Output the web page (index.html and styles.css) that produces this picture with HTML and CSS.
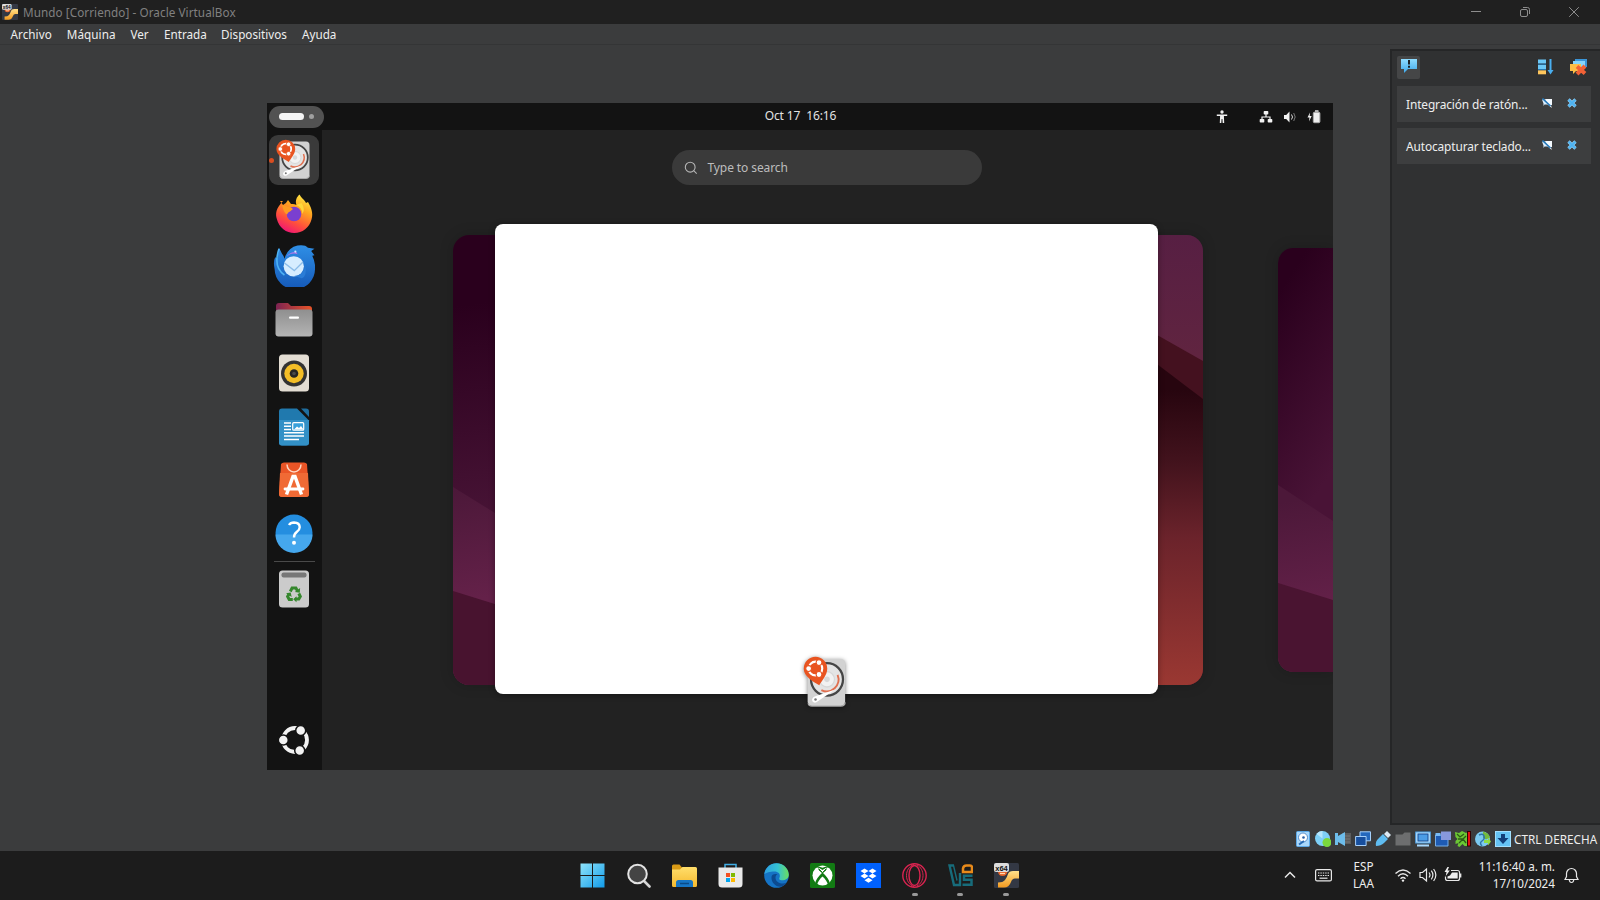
FILE: index.html
```html
<!DOCTYPE html>
<html lang="es">
<head>
<meta charset="utf-8">
<title>Mundo [Corriendo] - Oracle VirtualBox</title>
<link rel="stylesheet" href="styles.css">
</head>
<body>
<svg class="defs" width="0" height="0">
  <defs>
    <linearGradient id="gFox" x1="0.8" y1="0" x2="0.3" y2="1"><stop offset="0" stop-color="#fff04a"/><stop offset=".35" stop-color="#ffa51f"/><stop offset=".7" stop-color="#ff4f3c"/><stop offset="1" stop-color="#ef1477"/></linearGradient>
    <linearGradient id="gBird" x1="0" y1="0" x2="0" y2="1"><stop offset="0" stop-color="#2f8fe6"/><stop offset="1" stop-color="#1559b8"/></linearGradient>
    <linearGradient id="gFolder" x1="0" y1="0" x2="1" y2="0"><stop offset="0" stop-color="#7c2352"/><stop offset="1" stop-color="#ea5428"/></linearGradient>
    <linearGradient id="gGrey" x1="0" y1="0" x2="0" y2="1"><stop offset="0" stop-color="#8f8f8f"/><stop offset="1" stop-color="#b4b4b4"/></linearGradient>
    <linearGradient id="gWin" x1="0" y1="0" x2="1" y2="1"><stop offset="0" stop-color="#8fe4fc"/><stop offset="1" stop-color="#119be8"/></linearGradient>
    <linearGradient id="gEdge" x1="0" y1="0" x2="1" y2="0"><stop offset="0" stop-color="#2d9fe0"/><stop offset=".55" stop-color="#35c2d3"/><stop offset="1" stop-color="#6be05c"/></linearGradient>
    <linearGradient id="gSky" x1="0" y1="0" x2="0" y2="1"><stop offset="0" stop-color="#8fdcff"/><stop offset="1" stop-color="#3ea8ea"/></linearGradient>
    <linearGradient id="gGold" x1="0" y1="0" x2="0" y2="1"><stop offset="0" stop-color="#ffe08a"/><stop offset="1" stop-color="#f39a1f"/></linearGradient>
    <linearGradient id="gFile" x1="0" y1="0" x2="0" y2="1"><stop offset="0" stop-color="#ffde6b"/><stop offset="1" stop-color="#f5b92e"/></linearGradient>
    <symbol id="vm" viewBox="0 0 25 25">
      <rect width="25" height="25" rx="1.5" fill="#333844"/>
      <path d="M4 24.500v-5q5 0 7-2.500t3-6q1-3 5-3h6v7.500h-4q-3 0-4 3.500-2 5.500-7 5.500z" fill="url(#gGold)"/>
      <path d="M4 8h9.500q-.5 5-5 5t-4.500-5z" fill="#e8642a"/><path d="M6 10.500h5" stroke="#ffd9b0" stroke-width="1.200"/>
      <rect x="0" y="0" width="15" height="9" rx="2" fill="#dcdcdc"/>
      <text x="7.5" y="7.6" text-anchor="middle" class="badge">x64</text>
    </symbol>
    <symbol id="installer" viewBox="0 0 40 44">
      <rect x="4.500" y="5.500" width="30" height="37" rx="3.500" fill="#d2d2d2"/>
      <path d="M5 40q0 2.500 3 2.500h23q3.500 0 3.500-3" stroke="#aaa" fill="none"/>
      <circle cx="20" cy="21.500" r="12.800" fill="#e4e4e4" stroke="#454545" stroke-width="1.800"/>
      <circle cx="20" cy="21.500" r="6" fill="#f2f2f2" stroke="#d8d8d8"/><circle cx="20" cy="21.500" r="2.200" fill="#d8d8d8"/>
      <path d="M28.500 18a9.500 9.500 0 0 1-13 12" fill="none" stroke="#e07050" stroke-width="1.500"/>
      <path d="M8 37.500a2.400 2.400 0 0 0 3.500 2l15-10-14 4.700q-4 .8-4.500 3.300z" fill="#fff"/><circle cx="10.800" cy="37.300" r="1" fill="#777"/>
      <path d="M10.800 3.700a9.400 9.400 0 0 1 9.400 9.400c0 5-4.400 9.400-6.400 13-5-3-12.400-7-12.400-13a9.400 9.400 0 0 1 9.400-9.400z" fill="#e95420"/>
      <circle cx="10.800" cy="13" r="5.400" fill="none" stroke="#fff" stroke-width="1.700"/>
      <g fill="#fff" stroke="#e95420" stroke-width=".8"><circle cx="5.300" cy="13" r="2.300"/><circle cx="13.600" cy="8.300" r="2.300"/><circle cx="13.600" cy="17.700" r="2.300"/></g>
    </symbol>
    <symbol id="speechoff" viewBox="0 0 12 12"><path d="M4 2h7v6h-1l.7 3-4.200-3.800z" fill="#f4faff"/><path d="M1 2.500h3l3 5h-3.500l-1 1.500v-2.500z" fill="#dcefff"/><path d="M1.500 1.500l8 7.500" stroke="#2176b8" stroke-width="1.600"/></symbol>
    <symbol id="cross" viewBox="0 0 12 12"><path d="M2.500 2.500l7 7m0-7l-7 7" stroke="#8fd2fb" stroke-width="3.200"/><path d="M2.700 2.700l6.600 6.600m0-6.600l-6.600 6.600" stroke="#4db2f0" stroke-width="2"/></symbol>
  </defs>
</svg>

<header class="titlebar">
  <svg class="title-icon" viewBox="0 0 25 25"><use href="#vm"/></svg>
  <span class="title">Mundo [Corriendo] - Oracle VirtualBox</span>
  <div class="controls">
    <svg viewBox="0 0 12 12"><path d="M1 5.500h10"/></svg>
    <svg viewBox="0 0 12 12"><rect x="1.500" y="3.500" width="7" height="7" rx="1.500"/><path d="M4 1.500h4.500q2 0 2 2v4.500"/></svg>
    <svg viewBox="0 0 12 12"><path d="M1.200 1.200l9.600 9.600m0-9.600l-9.600 9.600"/></svg>
  </div>
</header>
<nav class="menubar"><span class="m1">Archivo</span><span class="m2">Máquina</span><span class="m3">Ver</span><span class="m4">Entrada</span><span class="m5">Dispositivos</span><span class="m6">Ayuda</span></nav>

<main class="body">
  <section class="guest-area">
    <div class="guest">
      <div class="topbar">
        <div class="pill"><i class="dash"></i><i class="dot"></i></div>
        <span class="clock">Oct 17&nbsp; 16:16</span>
        <div class="sys">
          <svg class="acc" width="12" height="14" viewBox="0 0 12 14" fill="#f2f2f2"><circle cx="6" cy="2" r="1.700"/><path d="M.8 4.600h10.400v1.500h-3.300l.3 6.900h-1.500l-.3-4h-.8l-.3 4h-1.500l.3-6.900h-3.300z"/></svg>
          <svg class="net" width="14" height="14" viewBox="0 0 14 14" fill="#f2f2f2"><rect x="4.700" y="1" width="4.600" height="3.600" rx=".8"/><rect x=".7" y="9" width="4.600" height="3.600" rx=".8"/><rect x="8.700" y="9" width="4.600" height="3.600" rx=".8"/><path d="M7 4v3M3 9.500v-2.500h8v2.500" fill="none" stroke="#f2f2f2" stroke-width="1.200"/></svg>
          <svg class="vol" width="14" height="14" viewBox="0 0 14 14" fill="#f2f2f2"><path d="M1 5h2.200l3.300-3.500v11l-3.300-3.500h-2.200z"/><path d="M8.500 4.500q2 2.500 0 5" fill="none" stroke="#ddd"/><path d="M10.700 3q3 4 0 8" fill="none" stroke="#777"/></svg>
          <svg width="14" height="14" viewBox="0 0 14 14"><path d="M3 2.500l-2.500 5h2l-.5 4 2.700-5.500h-2z" fill="#f2f2f2"/><rect x="6.300" y="2.200" width="6.600" height="10.500" rx="1.200" fill="#eee" stroke="#aaa"/><path d="M8 1h3.500" stroke="#ddd" stroke-width="1.500"/></svg>
        </div>
      </div>
      <div class="desktop">
        <aside class="dock">
          <div class="tile active"><i class="running"></i><svg width="40" height="44" viewBox="0 0 40 44"><use href="#installer"/></svg></div>
          <div class="tile"><svg width="40" height="40" viewBox="0 0 40 40"><path d="M6 8l3 4q3-1 5-5l3 4q3-.5 5.500 1c-1.500-4 0-8 3-10.500 2 4 5 5 6.500 8.500l2-1c3 5 5.500 11 3.500 17.500a17.800 17.800 0 0 1-34.500 0c-2-6-1-11 6-18.500z" fill="url(#gFox)"/><circle cx="20" cy="21" r="7.300" fill="#7a3fd0"/><path d="M8 12q3 0 5 1.500 4 .3 6 2.500l-3 2.500q-2 .5-3 3-3-1-5-9.500z" fill="#ff9b22"/><path d="M22 12q6 2 6.500 9 3-5-1-11z" fill="#ffd83a"/></svg></div>
          <div class="tile mail"><svg width="42" height="42" viewBox="1.500 2.500 38.500 38.500"><path d="M7 5l3 6q2 2 2 4 3-10 12-12 7-1 9.500 2l6 1-3 2 3 4-2 .3q3 6 2.500 12a18.300 18.300 0 0 1-37 .5q-1.500-7 .5-11l2 1z" fill="url(#gBird)"/><path d="M7 6c-4 12-1 20 5 24" fill="none" stroke="#4db2f5" stroke-width="1.500"/><circle cx="20.500" cy="22" r="9.300" fill="#d6edff"/><path d="M12 19l9 7 8-8" stroke="#8bbce8" fill="none" stroke-width="1.300"/><path d="M21 31q9-1 10-10 2 10-3 12z" fill="#2a7cd6"/><path d="M14 13q5-4 10-2l-1-2q-5-1-9 4z" fill="#a979e8"/><circle cx="22" cy="8.500" r="1" fill="#cfe8ff"/></svg></div>
          <div class="tile"><svg width="40" height="40" viewBox="0 0 40 40"><path d="M2 6q0-3 3-3h9l3 3h18q3 0 3 3v12h-36z" fill="url(#gFolder)"/><rect x="1.500" y="9.500" width="37" height="27" rx="3" fill="url(#gGrey)"/><rect x="15" y="16.500" width="10" height="2.200" rx="1" fill="#fff"/></svg></div>
          <div class="tile"><svg width="40" height="40" viewBox="0 0 40 40"><rect x="5" y="1.500" width="30" height="37" rx="3.500" fill="#e3ddd3"/><circle cx="20" cy="20.500" r="13" fill="#333"/><circle cx="20" cy="20.500" r="9.700" fill="#f3bd26"/><circle cx="20" cy="20.500" r="4.300" fill="#252525"/><circle cx="20" cy="20.500" r="1.800" fill="#4a4a4a"/></svg></div>
          <div class="tile"><svg width="40" height="40" viewBox="0 0 40 40"><path d="M8 1.500h15l12 12v22q0 3-3 3h-24q-3 0-3-3v-31q0-3 3-3z" fill="#2079ae"/><path d="M5 13h30v22.500q0 3-3 3h-24q-3 0-3-3z" fill="#3290c6"/><path d="M27 1.500h5q3 0 3 3v5.500z" fill="#1f6e9f"/><path d="M10 16h7m-7 3.300h7m-7 3.300h7m-7 3.200h20m-20 3.300h20m-20 3.300h15" stroke="#fff" stroke-width="1.500"/><rect x="18.700" y="15.700" width="11" height="7.500" rx="1" fill="#38a0da" stroke="#fff" stroke-width="1.200"/><path d="M20 22.500l3-3 2 1.500 2-2 2.500 3.500z" fill="#fff"/></svg></div>
          <div class="tile"><svg width="40" height="40" viewBox="0 0 40 40"><path d="M7 4q1-1.500 3-1.500h20q2 0 3 1.500l2 30q0 3-3 3h-24q-3 0-3-3z" fill="#ea5526"/><path d="M6 13h28l1 21q0 3-3 3h-24q-3 0-3-3z" fill="#f06a35"/><path d="M13 4.500a7 7.500 0 0 0 14 0" fill="none" stroke="#ffd7c2" stroke-width="1.500"/><path d="M12.500 34.500l6.500-18h2l6.500 18" fill="none" stroke="#fff" stroke-width="3.400"/><path d="M11 29h18" stroke="#fff" stroke-width="2.800" stroke-linecap="round"/></svg></div>
          <div class="tile"><svg width="40" height="40" viewBox="0 0 40 40"><circle cx="20" cy="20" r="18.500" fill="#248ee0"/><path d="M1.500 21.500h37a18.500 18.500 0 0 1-37 0z" fill="#45a7ed"/><path d="M15 12q1.500-2.500 5-2.500 5.700.2 5.700 4.700 0 2.500-3 4.800-2.700 2-2.700 5.500" fill="none" stroke="#fff" stroke-width="2.400"/><circle cx="20" cy="29.700" r="2" fill="#fff"/></svg></div>
          <hr class="sep">
          <div class="tile"><svg width="40" height="40" viewBox="0 0 40 40"><rect x="5" y="1.500" width="30" height="37" rx="3.500" fill="#cbcbcb"/><rect x="7.500" y="3.500" width="25" height="5" rx="2" fill="#777"/><g fill="none" stroke="#35872d" stroke-width="3"><path d="M16.300 22.500l1.800-3.400h3.800l1.600 2.800"/><path d="M24.800 24.500l1.500 3-1.500 2.500h-3.300"/><path d="M18.800 30.500h-3.600l-1.600-3 1.300-2.300"/></g><path d="M20.800 23l5 .8.300-4.800zM22.500 27.200v6l-3.300-3zM12 24.200l4.700-.7 1 4.600z" fill="#35872d"/></svg></div>
          <div class="launcher"><svg width="32" height="32" viewBox="0 0 32 32"><circle cx="17" cy="16" r="12" fill="none" stroke="#f2f2f2" stroke-width="3.800"/><g fill="#f2f2f2" stroke="#131313" stroke-width="1.500"><circle cx="5.300" cy="16" r="5"/><circle cx="22.700" cy="6.500" r="5"/><circle cx="21.700" cy="26.500" r="5"/></g></svg></div>
        </aside>
        <div class="overview">
          <div class="search"><svg width="14" height="14" viewBox="0 0 14 14" fill="none" stroke="#b5b5b5" stroke-width="1.100"><circle cx="6.200" cy="6.200" r="4.900"/><path d="M9.700 9.700l3 3"/></svg><span>Type to search</span></div>
          <div class="workspaces">
            <div class="ws ws-main">
              <svg class="wall" viewBox="0 0 750 450" preserveAspectRatio="none">
                <defs>
                  <linearGradient id="w1" gradientUnits="userSpaceOnUse" x1="0" y1="0" x2="40" y2="280"><stop offset=".25" stop-color="#2a001d"/><stop offset="1" stop-color="#471335"/></linearGradient>
                  <linearGradient id="w2" gradientUnits="userSpaceOnUse" x1="0" y1="255" x2="20" y2="365"><stop offset="0" stop-color="#4c1839"/><stop offset="1" stop-color="#642149"/></linearGradient>
                  <linearGradient id="w3" gradientUnits="userSpaceOnUse" x1="0" y1="155" x2="0" y2="450"><stop offset="0" stop-color="#27050f"/><stop offset=".25" stop-color="#43131d"/><stop offset=".5" stop-color="#6b232b"/><stop offset="1" stop-color="#9a3832"/></linearGradient>
                  <linearGradient id="w4" gradientUnits="userSpaceOnUse" x1="0" y1="0" x2="0" y2="120"><stop offset="0" stop-color="#571f43"/><stop offset="1" stop-color="#602440"/></linearGradient>
                </defs>
                <rect width="400" height="450" fill="url(#w1)"/>
                <path d="M0 252L100 314V450H0z" fill="url(#w2)"/>
                <path d="M0 356L100 387V450H0z" fill="#48132f"/>
                <path d="M600 0H750V450H600z" fill="url(#w4)"/>
                <path d="M600 41L750 126V450H600z" fill="#44111f"/>
                <path d="M600 50L750 164V450H600z" fill="url(#w3)"/>
              </svg>
              <div class="window"></div>
              <svg class="window-app" width="50" height="56" viewBox="0 0 40 44" preserveAspectRatio="none"><use href="#installer"/></svg>
            </div>
            <div class="ws ws-next">
              <svg class="wall" viewBox="0 0 55 424">
                <defs><linearGradient id="n1" x1="0" y1="0" x2=".3" y2="1"><stop offset=".15" stop-color="#2a001d"/><stop offset="1" stop-color="#491336"/></linearGradient></defs>
                <rect width="55" height="280" fill="url(#n1)"/>
                <path d="M0 237L55 273V424H0z" fill="url(#w2)"/>
                <path d="M0 335L55 352V424H0z" fill="#4a1431"/>
              </svg>
            </div>
          </div>
        </div>
      </div>
    </div>
  </section>
  <aside class="notes">
    <div class="notes-tools">
      <span class="toggle"><svg width="18" height="18" viewBox="0 0 18 18"><path d="M1 2h16v10h-9l-4 4v-4h-3z" fill="url(#gSky)"/><path d="M9 3v4.500m0 1.300v2" stroke="#111" stroke-width="1.800"/></svg></span>
      <svg class="sort" width="18" height="18" viewBox="0 0 18 18"><path d="M1 1.500h8v4h-8zM1 7h8v4h-8z" fill="#6cc8f7"/><path d="M1 12.300h8v4h-8z" fill="#ffc65c"/><path d="M1 6.200h8M1 11.600h8" stroke="#267ebd"/><path d="M13.500 1v12" stroke="#49aff0" stroke-width="2"/><path d="M10.500 12h6l-3 4.500z" fill="#49aff0"/></svg>
      <svg width="19" height="18" viewBox="0 0 19 18"><path d="M6 1h12v8h-12z" fill="#3b95d8"/><path d="M4 3h12v8h-12z" fill="#86d4fb"/><path d="M1 6h11v7h-5l-3 3v-3h-3z" fill="#ffbe45"/><path d="M8 8.500l8 7m0-7.500l-8 8" stroke="#f26136" stroke-width="4"/></svg>
    </div>
    <div class="note"><span>Integración de ratón...</span><svg width="12" height="12"><use href="#speechoff"/></svg><svg width="12" height="12"><use href="#cross"/></svg></div>
    <div class="note"><span>Autocapturar teclado...</span><svg width="12" height="12"><use href="#speechoff"/></svg><svg width="12" height="12"><use href="#cross"/></svg></div>
  </aside>
</main>

<div class="status">
  <svg viewBox="0 0 16 16"><rect x="1.500" y=".5" width="13" height="15" rx="1" fill="#a9d8fb" stroke="#5ca9e8"/><circle cx="8" cy="6.500" r="4.500" fill="#fff" stroke="#3a79bf" stroke-width=".8"/><circle cx="8.500" cy="6.500" r="1.300" fill="#2a5fa5"/><path d="M4 13.500l5-3.500" stroke="#286bb5" stroke-width="2"/></svg>
  <svg viewBox="0 0 16 16"><circle cx="7.500" cy="7.500" r="7.500" fill="#7ed0f7"/><path d="M7.500 7.500l-6-4.500a7.500 7.500 0 0 1 6-3z" fill="#b5e6fd"/><circle cx="12" cy="11.500" r="4.500" fill="#7ad83d"/></svg>
  <svg viewBox="0 0 16 16"><path d="M7 2h9v11h-9z" fill="#5b5c5d"/><path d="M9 5h6M9 8h6M9 11h6" stroke="#777"/><path d="M0 2h3v3l7-4v14l-7-4v3h-3z" fill="#6dbdeb"/></svg>
  <svg viewBox="0 0 16 16"><path d="M5 .8h10.500v9h-10.500z" fill="#2468bd" stroke="#a6d0fa"/><path d="M.6 5.500h10.500v9h-10.500z" fill="#174f9e" stroke="#a6d0fa"/></svg>
  <svg viewBox="0 0 16 16"><path d="M1 15q-1-5 3-8l4-4 5 5-4 4q-3 3-8 3z" fill="#5fbcf1"/><path d="M9 3l3-3 4 4-3 3z" fill="#dce9f3"/></svg>
  <svg viewBox="0 0 16 16"><path d="M.5 3.500h7l2-2h6v13h-15z" fill="#6d6e6f"/></svg>
  <svg viewBox="0 0 16 16"><rect x=".7" y="1" width="14.600" height="11" fill="#b9e3ff" stroke="#4d9fe3"/><rect x="3" y="3" width="10" height="7" fill="#4b9de6" stroke="#164b93"/><path d="M2 14.500h12" stroke="#a9d9ff" stroke-width="2"/></svg>
  <svg viewBox="0 0 16 16"><path d="M.5 4h12.500v11h-12.500z" fill="#1e5bb3" stroke="#75aee8"/><path d="M6 .5h10v8.500h-10z" fill="#8798dc"/><path d="M.5 2h5v3h-5z" fill="#79baf4"/></svg>
  <svg viewBox="0 0 16 16"><path d="M0 1l4 1 3-2 4 2 1.500-1v14h-3l-2-2-3 3-2-1 1-3-3 1v-3l2-2-2-2z" fill="#6cc734"/><path d="M2 3l3 3 4-3M3 8h5l3-3M4 12l4-4 3 4" stroke="#2c5c17" stroke-width="1.300" fill="none"/><rect x="12.500" y=".5" width="3" height="14.500" fill="#e61010" stroke="#300"/></svg>
  <svg viewBox="0 0 16 16"><circle cx="7.500" cy="8" r="7.500" fill="#7cc9f0"/><path d="M8 .500q6 1.500 7 6l-4 2-3-2z" fill="#74bb3c"/><path d="M4 4q4-2 5 1t-2 5q-3 2 0 5" stroke="#2f77a6" stroke-width="1.500" fill="none"/><path d="M9 9h4v-2.500l3 4-3 4v-2.500h-4z" fill="#8edb44"/></svg>
  <svg viewBox="0 0 16 16"><rect x=".5" y=".5" width="15" height="15" fill="#65c3f5" stroke="#a1dfff"/><path d="M6 3h4v4h3.500l-5.500 6-5.500-6h3.500z" fill="#123e79"/></svg>
  <span>CTRL DERECHA</span>
</div>

<footer class="taskbar">
  <div class="apps">
    <span class="app"><svg viewBox="0 0 25 25"><path d="M.5.500h11.500v11.500h-11.500zM13 .5h11.500v11.500h-11.500zM.5 13h11.500v11.500h-11.500zM13 13h11.500v11.500h-11.500z" fill="url(#gWin)"/></svg></span>
    <span class="app"><svg viewBox="0 0 25 25"><path d="M17.500 17.500l6 6" stroke="#d5d5d5" stroke-width="2.600" stroke-linecap="round"/><circle cx="11.500" cy="11" r="9.300" fill="#444" stroke="#e3e3e3" stroke-width="2"/></svg></span>
    <span class="app"><svg viewBox="0 0 25 25"><path d="M0 3q0-1.500 1.500-1.500h6l2.500 3h4v6h-14z" fill="#d99a16"/><path d="M0 6.500h8l2.500-2.500h13q1.500 0 1.500 1.500v17q0 1.500-1.500 1.500h-22q-1.500 0-1.500-1.500z" fill="url(#gFile)"/><path d="M4 24v-4.500q0-2.500 2.500-2.500h12q2.500 0 2.500 2.500v4.500z" fill="#1675c5"/><path d="M8 20.500h9" stroke="#0a4a87" stroke-width="1.500"/></svg></span>
    <span class="app"><svg viewBox="0 0 25 25"><path d="M7 5v-3.500h11v3.500" fill="none" stroke="#41aee5" stroke-width="1.500"/><path d="M.5 4.500h24v16.500q0 3.500-3.500 3.500h-17q-3.500 0-3.500-3.500z" fill="#e9e9e9"/><path d="M8 10h4v4h-4z" fill="#f25022"/><path d="M13 10h4v4h-4z" fill="#7fba00"/><path d="M8 15h4v4h-4z" fill="#00a4ef"/><path d="M13 15h4v4h-4z" fill="#ffb900"/></svg></span>
    <span class="app"><svg viewBox="0 0 25 25"><circle cx="12.500" cy="12.500" r="12.300" fill="#1573c5"/><path d="M.3 11.500a12.300 12.300 0 0 1 24.500 0c0 5-4.500 6-7.500 5.700-3-.4-2-2-1.500-3.700.5-2.500-1.500-5-5.500-5s-8.500 1-10 3z" fill="url(#gEdge)"/><path d="M7.500 14c-.5 6 5 10.500 10 9.500 2-.5 4-2 5-3.700-4 2-11 .2-11-5 0-2 .8-3 2-3.500-3-.8-6 .2-6 2.700z" fill="#0c4a8f"/></svg></span>
    <span class="app"><svg viewBox="0 0 25 25"><rect width="25" height="25" rx="1.500" fill="#127b13"/><circle cx="12.500" cy="12.500" r="10" fill="#fff"/><path d="M5.500 4.200q3-.5 7 2.800 4-3.300 7-2.800l-1-1.500-6 2-6-2zM12.500 9.500c4 3.500 6.800 7.500 7.500 11l-2 1.500c-.5-3-3-6.500-5.500-8.500-2.500 2-5 5.500-5.500 8.500l-2-1.500c.7-3.500 3.500-7.500 7.500-11z" fill="#127b13"/><path d="M8.500 6.500l4 3.500 4-3.500M12.500 9.500l-4-4M12.500 9.500l4-4" stroke="#127b13" fill="none"/></svg></span>
    <span class="app"><svg viewBox="0 0 25 25"><rect width="25" height="25" fill="#0061fe"/><path d="M8.500 5.500l4 2.500-4 2.500-4-2.500zM16.500 5.500l4 2.500-4 2.500-4-2.500zM8.500 10.500l4 2.500-4 2.500-4-2.500zM16.500 10.500l4 2.500-4 2.500-4-2.500zM12.500 14.700l4 2.500-4 2.500-4-2.500z" fill="#fff"/></svg></span>
    <span class="app open"><svg viewBox="0 0 25 25"><g fill="none" stroke="#da2450" stroke-width="1.400"><circle cx="12.500" cy="12.500" r="11.700"/><ellipse cx="12.500" cy="12.500" rx="5.500" ry="10"/><path d="M12 1.500c-10 3-10 19 0 22M15 2c8 4 8 17 0 21" stroke-width="1"/></g></svg></span>
    <span class="app open"><svg viewBox="0 0 25 25"><path d="M6 2.500h-4.500l4.500 19.500h6v-12" fill="none" stroke="#176c7b" stroke-width="2.400"/><path d="M5.500 2.500l3.500 15" fill="none" stroke="#176c7b" stroke-width="1.400"/><path d="M15 9h9v-4.500q0-2-2-2h-3.500q-3 0-3.500 3z" fill="none" stroke="#e88a1a" stroke-width="2.500"/><path d="M24.500 12.800h-8.500v4h7.500v5h-9" fill="none" stroke="#176c7b" stroke-width="2.500"/></svg></span>
    <span class="app open"><svg viewBox="0 0 25 25"><use href="#vm"/></svg></span>
  </div>
  <div class="tray">
    <svg class="chev" width="12" height="12" viewBox="0 0 12 12"><path d="M1 8.500l5-5 5 5" stroke-width="1.500"/></svg>
    <svg class="kbd" width="17" height="13" viewBox="0 0 17 13"><rect x=".6" y=".6" width="15.800" height="11.300" rx="1.500"/><path d="M3 4h11M3 6.500h11" stroke-dasharray="1.400 1"/><path d="M4.500 9.200h8"/></svg>
    <div class="lang">ESP<br>LAA</div>
    <svg class="wifi" width="18" height="16" viewBox="0 0 18 16"><path d="M1.500 6.500q7.500-7 15 0M4 9.200q5-4.700 10 0M6.500 11.700q2.500-2.300 5 0" stroke-width="1.400"/><circle cx="9" cy="13.600" r="1.200" fill="#eee" stroke="none"/></svg>
    <svg class="snd" width="18" height="16" viewBox="0 0 18 16"><path d="M1 5.500h2.500l4-3.500v12l-4-3.500h-2.500zM10 5.500q2 2.500 0 5M12.300 3.700q3.200 4.300 0 8.600M14.600 2q4.500 6 0 12"/></svg>
    <svg class="bat" width="18" height="16" viewBox="0 0 18 16"><path d="M7 3.500h6.500q2 0 2 2v6q0 2-2 2h-10q-2 0-2-2v-2"/><path d="M8 5.500h5.700v6h-10.200v-2l2.500-1z" fill="#eee" stroke="none"/><path d="M16.500 6.500v4" stroke-width="1.700"/><path d="M3.500 0l-3 5h2l-.7 4 4-5.500h-2.300l1.500-3.500z" fill="#eee" stroke="none"/></svg>
    <div class="time">11:16:40 a. m.<br>17/10/2024</div>
    <svg width="15" height="17" viewBox="0 0 15 17"><path d="M1 12.500l1.500-3v-3a5 5 0 0 1 10 0v3l1.500 3zM5.300 13q.3 2.500 2.200 2.500t2.200-2.500" stroke-width="1.200"/></svg>
  </div>
</footer>
</body>
</html>
```
FILE: styles.css
```css
* { box-sizing: border-box; }
body { margin: 0; width: 1600px; height: 900px; overflow: hidden; display: flex; flex-direction: column; background: #3b3c3d; color: #eee; font: 11.7px/16px "Noto Sans", "Open Sans", sans-serif; white-space: nowrap; }
svg { display: block; flex: none; }
.defs { position: absolute; }
.badge { font: bold 7.5px "Liberation Sans", sans-serif; fill: #111; }

.titlebar { height: 24px; flex: none; background: #202020; display: flex; align-items: center; padding-left: 2px; }
.title-icon { width: 16px; height: 16px; }
.title { margin-left: 5px; color: #808080; letter-spacing: .07px; }
.controls { margin-left: auto; display: flex; gap: 37px; padding-right: 20.500px; }
.controls svg { width: 12px; height: 12px; fill: none; stroke: #8d8d8d; stroke-width: 1; }
.menubar { height: 21px; flex: none; display: flex; align-items: center; padding-left: 10.500px; border-bottom: 1px solid #343536; }
.m1 { width: 56.300px; letter-spacing: .05px; }
.m2 { width: 63.700px; letter-spacing: .05px; }
.m3 { width: 33.500px; }
.m4 { width: 57px; }
.m5 { width: 81px; }

.body { height: 780px; flex: none; display: flex; justify-content: space-between; }
.guest-area { padding: 58px 0 0 267px; }
.guest { width: 1066px; height: 667px; background: #222; display: flex; flex-direction: column; overflow: hidden; }
.topbar { height: 27px; flex: none; background: #131313; display: grid; grid-template-columns: 1fr auto 1fr; align-items: center; }
.pill { width: 55px; height: 22px; margin-left: 2px; border-radius: 11px; background: #525252; display: flex; align-items: center; gap: 5px; padding-left: 10px; }
.dash { width: 25px; height: 7px; border-radius: 4px; background: #f5f5f5; }
.dot { width: 5px; height: 5px; border-radius: 50%; background: #a0a0a0; }
.clock { font-size: 12px; letter-spacing: -.13px; padding: 0 0 2px 1px; color: #e2e2e2; }
.sys { display: flex; justify-content: flex-end; padding-right: 12.500px; }
.acc { margin-right: 31px; }
.net { margin-right: 10px; }
.vol { margin-right: 9.500px; }

.desktop { flex: 1; display: flex; min-height: 0; }
.dock { width: 55px; flex: none; background: #131313; padding: 5px 3px 14px 2px; display: flex; flex-direction: column; gap: 3.330px; }
.tile { width: 50px; height: 50px; flex: none; display: grid; place-items: center; }
.mail { padding-bottom: 2px; }
.active { background: #3a3a3a; border-radius: 9px; position: relative; }
.active svg { margin: -5px 0 0 1px; }
.running { position: absolute; left: 0; top: 23px; width: 5px; height: 5px; border-radius: 50%; background: #d94d20; }
.sep { width: 41px; height: 1px; flex: none; border: 0; background: #4a4a4a; margin: -1px 0 -1px 5px; }
.launcher { margin: auto auto 0 9px; }

.overview { flex: 1; padding-top: 20px; min-width: 0; }
.search { width: 310px; height: 35px; margin-left: 350px; border-radius: 18px; background: #3a3a3a; display: flex; align-items: center; gap: 10px; padding-left: 11.500px; color: #bdbdbd; font-size: 12px; letter-spacing: -.1px; }
.workspaces { display: flex; align-items: flex-start; margin: 50px 0 0 130.500px; }
.ws { flex: none; position: relative; box-shadow: 0 0 14px rgba(0,0,0,.18); }
.ws-main { width: 750px; height: 450px; border-radius: 16px; }
.ws-next { width: 55px; height: 424px; margin: 13px 0 0 75.500px; border-radius: 15px 0 0 15px; }
.wall { width: 100%; height: 100%; border-radius: inherit; }
.window { position: absolute; left: 42.500px; top: -11px; width: 663px; height: 470px; border-radius: 8px; background: #fff; box-shadow: 0 1px 6px rgba(0,0,0,.35); }
.window-app { position: absolute; left: 349.500px; top: 417px; filter: drop-shadow(0 1px 2px rgba(0,0,0,.5)); }

.notes { width: 210px; height: 776px; margin-top: 4px; background: #303132; border: 2px solid #252627; border-right: 0; padding: 4px 9px 0 5px; display: flex; flex-direction: column; gap: 5.500px; }
.notes-tools { display: flex; align-items: center; height: 25px; padding: 0 3px 1px 0; }
.toggle { width: 23px; height: 23px; border-radius: 2px; background: #454647; display: grid; place-items: center; padding-bottom: 2px; }
.sort { margin-left: auto; margin-right: 14px; }
.note { height: 36.500px; background: #3d3e3f; display: flex; align-items: center; padding-left: 9px; font-size: 11.900px; }
.note span { width: 135px; letter-spacing: -.12px; }
.note svg { margin: -2px 13px 0 0; }

.status { height: 26px; flex: none; display: flex; align-items: center; gap: 4px; padding: 2px 0 0 1295px; }
.status svg { width: 16px; height: 16px; }
.status span { letter-spacing: .05px; margin-left: -1px; }

.taskbar { height: 49px; flex: none; background: #1c1c1c; display: flex; justify-content: space-between; padding: 0 21px 0 570px; }
.apps { display: flex; }
.app { width: 45.950px; padding-top: 12px; display: flex; flex-direction: column; align-items: center; gap: 5px; }
.app svg { width: 25px; height: 25px; }
.open::after { content: ""; width: 6px; height: 3px; border-radius: 2px; background: #999; }
.tray { display: flex; align-items: center; line-height: 17px; padding-bottom: 1px; }
.tray svg { fill: none; stroke: #e8e8e8; stroke-width: 1.200; }
.chev { margin-right: 19px; }
.kbd { margin-right: 20px; }
.lang { width: 24px; text-align: center; margin-right: 18px; }
.wifi, .snd { margin-right: 7px; }
.bat { margin-right: 9.500px; }
.time { width: 84px; text-align: right; margin-right: 9px; }
```
